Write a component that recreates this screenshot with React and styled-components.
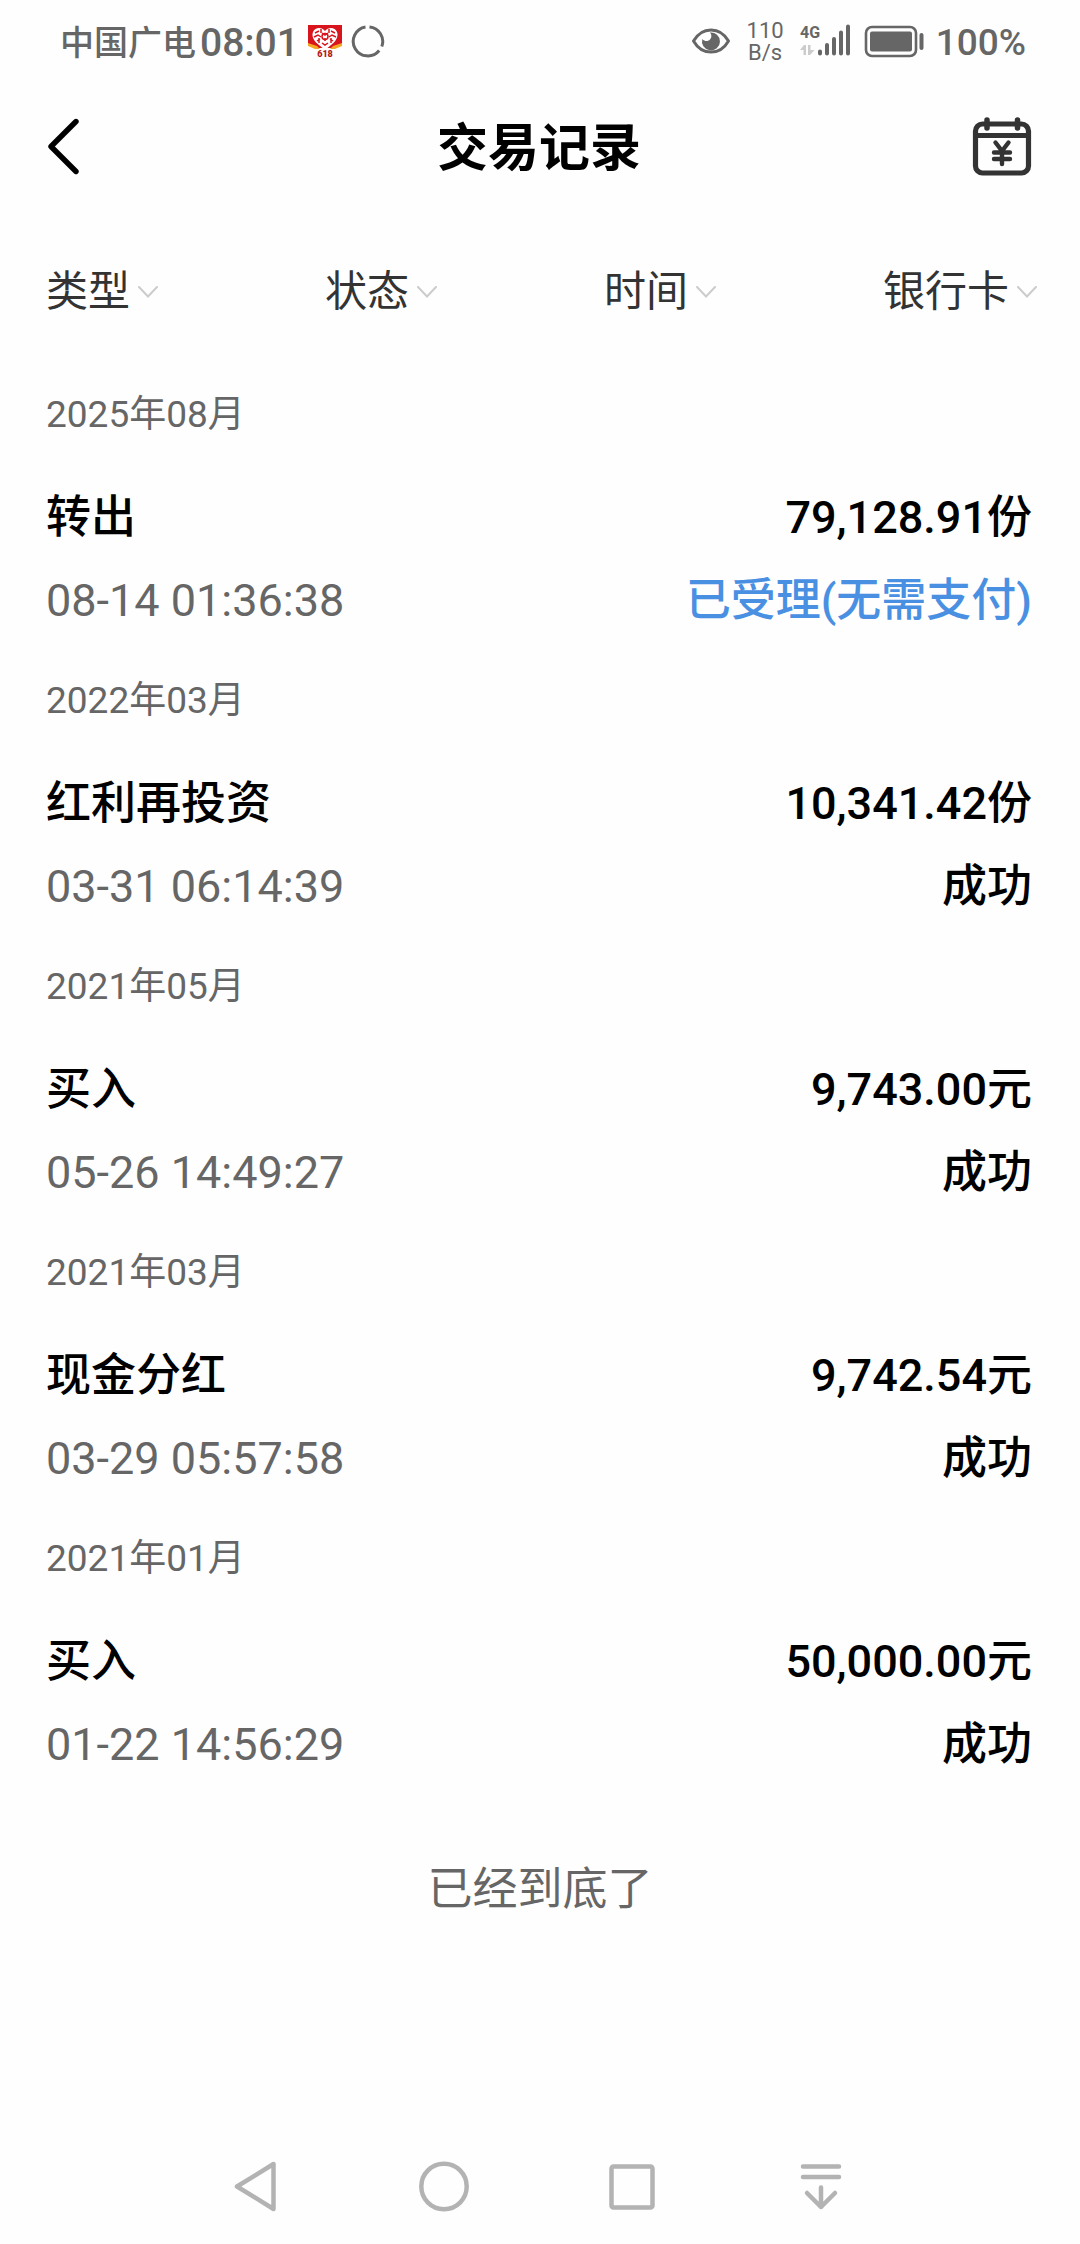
import React from 'react'
import styled, { createGlobalStyle } from 'styled-components'

const filters = ['类型', '状态', '时间', '银行卡']

const records = [
	{
		month: '2025年08月',
		name: '转出',
		amount: '79,128.91份',
		time: '08-14 01:36:38',
		status: '已受理(无需支付)',
		pending: true,
	},
	{
		month: '2022年03月',
		name: '红利再投资',
		amount: '10,341.42份',
		time: '03-31 06:14:39',
		status: '成功',
	},
	{
		month: '2021年05月',
		name: '买入',
		amount: '9,743.00元',
		time: '05-26 14:49:27',
		status: '成功',
	},
	{
		month: '2021年03月',
		name: '现金分红',
		amount: '9,742.54元',
		time: '03-29 05:57:58',
		status: '成功',
	},
	{
		month: '2021年01月',
		name: '买入',
		amount: '50,000.00元',
		time: '01-22 14:56:29',
		status: '成功',
	},
]

function PromoIcon() {
	return (
		<svg width="36" height="36" viewBox="0 0 36 36" aria-hidden="true">
			<path d="M1 1H35V21L26 24H10L1 21Z" fill="#d8141c" />
			<path d="M1 19L10 22L13 25H8L1 22ZM35 19L26 22L23 25H28L35 22Z" fill="#f5a623" />
			<path
				d="M18 7C15 3 8 3 6 8C4 13 8 18 12 21L18 26L24 21C28 18 32 13 30 8C28 3 21 3 18 7Z"
				fill="#fff"
			/>
			<path
				d="M8 9L12 7M7 13L11 11L14 13M10 17L13 15M15 9L18 11L21 9M24 7L28 9M22 13L25 11L29 13M23 15L26 17M18 14V17M15 19L18 21L21 19M14 5V9M22 5V9M12 14V19M24 14V19"
				stroke="#d8141c"
				strokeWidth="1.5"
				fill="none"
			/>
			<circle cx="18" cy="12.5" r="3" fill="none" stroke="#d8141c" strokeWidth="1.5" />
			<text
				x="18"
				y="33"
				textAnchor="middle"
				fontFamily="Roboto, sans-serif"
				fontWeight="900"
				fontSize="9"
				fill="#b3161c"
			>
				618
			</text>
		</svg>
	)
}

function RingIcon() {
	return (
		<svg width="34" height="34" viewBox="0 0 34 34" aria-hidden="true">
			<path
				d="M18.5 1.9A14.6 14.6 0 0 1 30.8 21.5M28.2 25.5A14.6 14.6 0 1 1 14.5 1.9"
				fill="none"
				stroke="#666"
				strokeWidth="3"
			/>
		</svg>
	)
}

function EyeIcon() {
	return (
		<svg width="40" height="28" viewBox="0 0 40 28" aria-hidden="true">
			<path
				d="M2.5 13C11 -1.8 29 -1.8 37.5 13C29 27.8 11 27.8 2.5 13Z"
				fill="none"
				stroke="#666"
				strokeWidth="3"
				strokeLinejoin="round"
			/>
			<path
				d="M19 4.500A9 9 0 1 1 11.3 11C13.5 13.5 17 13.8 19 11.6C21 9.4 20.8 6.5 19 4.500Z"
				fill="#666"
			/>
		</svg>
	)
}

function SignalIcon() {
	return (
		<svg width="52" height="36" viewBox="0 0 52 36" role="img" aria-label="4G">
			<text x="0" y="14" fontFamily="Roboto, sans-serif" fontWeight="700" fontSize="16" fill="#666">
				4G
			</text>
			<path d="M0 26L4 21H6V31H3.5V26ZM8 21H10.500V26H14.500L10 31H8Z" fill="#ccc" />
			<path
				d="M20 27.5V29.500M27 21V29.500M34 15V29.500M41 8.500V29.500M48 2.500V29.500"
				stroke="#666"
				strokeWidth="4"
				strokeLinecap="round"
			/>
		</svg>
	)
}

function BatteryIcon() {
	return (
		<svg width="60" height="34" viewBox="0 0 60 34" aria-hidden="true">
			<rect x="2" y="2" width="50" height="29" rx="6" fill="none" stroke="#666" strokeWidth="2.6" />
			<rect x="6" y="6.500" width="42" height="20" rx="2" fill="#666" />
			<path d="M57.500 10V23" stroke="#666" strokeWidth="4" strokeLinecap="round" />
		</svg>
	)
}

function BackIcon() {
	return (
		<svg width="34" height="58" viewBox="0 0 34 58" aria-hidden="true">
			<path
				d="M30 3.500L5 28.500L30 53.500"
				fill="none"
				stroke="#000"
				strokeWidth="5.4"
				strokeLinecap="round"
				strokeLinejoin="round"
			/>
		</svg>
	)
}

function CalendarIcon() {
	return (
		<svg width="60" height="60" viewBox="0 0 60 60" aria-hidden="true">
			<g fill="none" stroke="#333" strokeWidth="5.2" strokeLinecap="round" strokeLinejoin="round">
				<rect x="3.500" y="7" width="53" height="49" rx="7" />
				<path d="M3.500 18.500H56.500" strokeLinecap="butt" />
				<path d="M15 3V11M45.500 3V11" strokeWidth="5.500" />
				<path d="M23.500 25.500L30 34L36.500 25.500M22 35.500H38M22 42H38M30 34V47" strokeWidth="4.400" />
			</g>
		</svg>
	)
}

function ChevronIcon() {
	return (
		<svg width="20" height="12" viewBox="0 0 20 12" aria-hidden="true">
			<path d="M1 1L10 10.500L19 1" fill="none" stroke="#ccc" strokeWidth="2" strokeLinecap="round" />
		</svg>
	)
}

function App() {
	return (
		<Page>
			<GlobalStyle />
			<StatusBar>
				<StatusGroup $gap="8px">
					<Carrier>中国广电</Carrier>
					<Clock>08:01</Clock>
					<PromoIcon />
					<RingIcon />
				</StatusGroup>
				<StatusGroup $gap="12px">
					<EyeIcon />
					<Speed>
						<span>110</span>
						<span>B/s</span>
					</Speed>
					<SignalIcon />
					<BatteryIcon />
					<Percent>100%</Percent>
				</StatusGroup>
			</StatusBar>

			<Header>
				<IconButton aria-label="返回">
					<BackIcon />
				</IconButton>
				<h1>交易记录</h1>
				<IconButton aria-label="日历">
					<CalendarIcon />
				</IconButton>
			</Header>

			<Filters>
				{filters.map((item) => (
					<Filter key={item}>
						<select aria-label={item}>
							<option>{item}</option>
						</select>
						<ChevronIcon />
					</Filter>
				))}
			</Filters>

			<main>
				{records.map((item) => (
					<section key={item.month}>
						<Month>{item.month}</Month>
						<Record>
							<Row>
								<span>{item.name}</span>
								<span>{item.amount}</span>
							</Row>
							<Row>
								<Time>{item.time}</Time>
								<Status $pending={item.pending}>{item.status}</Status>
							</Row>
						</Record>
					</section>
				))}
				<ListEnd>已经到底了</ListEnd>
			</main>

			<NavBar>
				<IconButton aria-label="后退">
					<svg width="44" height="52" viewBox="0 0 44 52">
						<path d="M40.500 4V49L4 26.500Z" />
					</svg>
				</IconButton>
				<IconButton aria-label="主屏幕">
					<svg width="52" height="52" viewBox="0 0 52 52">
						<circle cx="26" cy="26.500" r="22.700" />
					</svg>
				</IconButton>
				<IconButton aria-label="最近任务">
					<svg width="48" height="52" viewBox="0 0 48 52">
						<rect x="3.500" y="6.500" width="41" height="41" rx="2" />
					</svg>
				</IconButton>
				<IconButton aria-label="通知栏">
					<svg width="44" height="52" viewBox="0 0 44 52">
						<path d="M4 6.500H40M4 17H40M22 27.500V47M8 33L22 47L36 33" />
					</svg>
				</IconButton>
			</NavBar>
		</Page>
	)
}

const GlobalStyle = createGlobalStyle`
	* {
		box-sizing: border-box;
	}

	body {
		margin: 0;
		background: #fefefe;
		color: #000;
		font-family: Roboto, 'Noto Sans CJK SC', sans-serif;
	}

	h1, h2, p {
		margin: 0;
	}

	svg {
		display: block;
		flex: none;
	}
`;

const Page = styled.div`
	display: flex;
	flex-direction: column;
	min-height: 100vh;
`;

const StatusBar = styled.div`
	display: flex;
	justify-content: space-between;
	align-items: center;
	height: 84px;
	padding: 0 54px 0 60px;
	color: #666;
	font-weight: 500;
`;

const StatusGroup = styled.div`
	display: flex;
	align-items: center;
	gap: ${({ $gap }) => $gap};
`;

const Carrier = styled.span`
	font-size: 34px;
	line-height: 42px;
	margin-right: -4px;
	padding-top: 2px;
`;

const Clock = styled.span`
	font-size: 39px;
	line-height: 42px;
	padding-top: 2px;
`;

const Speed = styled.div`
	display: flex;
	flex-direction: column;
	align-items: center;
	padding: 0 4px;
	font-size: 22px;
	font-weight: 400;
	line-height: 22px;
`;

const Percent = styled.span`
	font-size: 37px;
	line-height: 42px;
	padding-top: 2px;
`;

const Header = styled.header`
	display: grid;
	grid-template-columns: 1fr auto 1fr;
	align-items: center;
	height: 126px;
	padding: 0 48px 0 46px;

	h1 {
		padding-top: 4px;
		font-size: 51px;
		font-weight: 700;
		line-height: 60px;
	}

	button:last-child {
		justify-self: end;
	}

	button:first-child {
		justify-self: start;
	}
`;

const IconButton = styled.button`
	display: flex;
	justify-content: center;
	align-items: center;
	padding: 0;
	border: 0;
	background: none;
`;

const Filters = styled.div`
	display: flex;
	justify-content: space-between;
	align-items: center;
	height: 163px;
	padding: 0 43px 0 46px;
`;

const Filter = styled.label`
	display: flex;
	align-items: center;
	gap: 7px;

	select {
		appearance: none;
		padding: 0;
		border: 0;
		background: none;
		color: #333;
		font: inherit;
		font-size: 42px;
	}
`;

const Month = styled.h2`
	padding: 0 46px;
	color: #666;
	font-size: 37px;
	font-weight: 400;
	line-height: 84px;
`;

const Record = styled.div`
	padding: 19px 48px 17px 46px;
`;

const Row = styled.div`
	display: flex;
	justify-content: space-between;
	font-size: 45px;
	font-weight: 500;
	line-height: 83px;
`;

const Time = styled.span`
	color: #666;
	font-weight: 400;
`;

const Status = styled.span`
	color: ${({ $pending }) => ($pending ? '#4a90e2' : '#000')};
`;

const ListEnd = styled.p`
	color: #666;
	font-size: 45px;
	line-height: 174px;
	text-align: center;
`;

const NavBar = styled.nav`
	display: grid;
	grid-template-columns: repeat(4, 1fr);
	height: 116px;
	margin-top: auto;
	padding: 0 165px 0 161px;

	svg {
		fill: none;
		stroke: #b3b3b3;
		stroke-width: 4.5;
		stroke-linecap: round;
		stroke-linejoin: round;
	}
`;

export default App
